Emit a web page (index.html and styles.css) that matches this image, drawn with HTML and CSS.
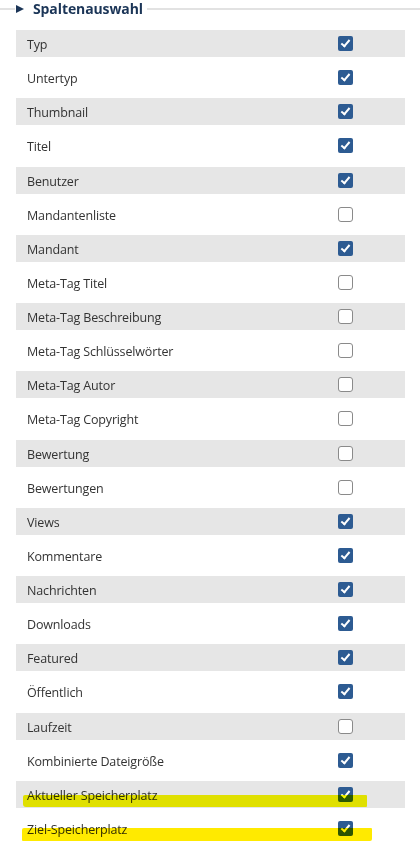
FILE: index.html
```html
<!DOCTYPE html>
<html lang="de">
<head>
<meta charset="utf-8">
<title>Spaltenauswahl</title>
<link rel="stylesheet" href="styles.css">
</head>
<body>
<section class="panel">
  <header class="legend">
    <span class="rule rule-left"></span>
    <span class="tri"></span>
    <span class="legend-text">Spaltenauswahl</span>
    <span class="rule rule-right"></span>
  </header>
  <div class="rows">
    <div class="row shade"><span class="label">Typ</span><span class="cb on"></span></div>
    <div class="row"><span class="label">Untertyp</span><span class="cb on"></span></div>
    <div class="row shade"><span class="label">Thumbnail</span><span class="cb on"></span></div>
    <div class="row"><span class="label">Titel</span><span class="cb on"></span></div>
    <div class="row shade"><span class="label">Benutzer</span><span class="cb on"></span></div>
    <div class="row"><span class="label">Mandantenliste</span><span class="cb"></span></div>
    <div class="row shade"><span class="label">Mandant</span><span class="cb on"></span></div>
    <div class="row"><span class="label">Meta-Tag Titel</span><span class="cb"></span></div>
    <div class="row shade"><span class="label">Meta-Tag Beschreibung</span><span class="cb"></span></div>
    <div class="row"><span class="label">Meta-Tag Schlüsselwörter</span><span class="cb"></span></div>
    <div class="row shade"><span class="label">Meta-Tag Autor</span><span class="cb"></span></div>
    <div class="row"><span class="label">Meta-Tag Copyright</span><span class="cb"></span></div>
    <div class="row shade"><span class="label">Bewertung</span><span class="cb"></span></div>
    <div class="row"><span class="label">Bewertungen</span><span class="cb"></span></div>
    <div class="row shade"><span class="label">Views</span><span class="cb on"></span></div>
    <div class="row"><span class="label">Kommentare</span><span class="cb on"></span></div>
    <div class="row shade"><span class="label">Nachrichten</span><span class="cb on"></span></div>
    <div class="row"><span class="label">Downloads</span><span class="cb on"></span></div>
    <div class="row shade"><span class="label">Featured</span><span class="cb on"></span></div>
    <div class="row"><span class="label">Öffentlich</span><span class="cb on"></span></div>
    <div class="row shade"><span class="label">Laufzeit</span><span class="cb"></span></div>
    <div class="row"><span class="label">Kombinierte Dateigröße</span><span class="cb on"></span></div>
    <div class="row shade"><span class="label">Aktueller Speicherplatz</span><span class="cb on"></span><span class="mark mark-a"></span></div>
    <div class="row"><span class="label">Ziel-Speicherplatz</span><span class="cb on"></span><span class="mark mark-b"></span></div>
  </div>
</section>
</body>
</html>
```
FILE: styles.css
```css
html, body {
  margin: 0;
  padding: 0;
  background: #ffffff;
}
body {
  width: 420px;
  height: 848px;
  overflow: hidden;
  font-family: "Open Sans", "Noto Sans", sans-serif;
}
.panel {
  display: flex;
  flex-direction: column;
}
.legend {
  display: flex;
  align-items: center;
  height: 18px;
}
.rule {
  height: 2px;
  background: #e2e2e2;
  margin-top: -1px;
}
.rule-left {
  width: 15px;
  flex: none;
}
.rule-right {
  flex: 1;
  margin-left: 4px;
}
.tri {
  flex: none;
  width: 0;
  height: 0;
  margin-left: 1px;
  margin-right: 9px;
  border-top: 4.5px solid transparent;
  border-bottom: 4.5px solid transparent;
  border-left: 8px solid #1b3557;
}
.legend-text {
  font-family: "Open Sans", "Noto Sans", sans-serif;
  font-weight: 700;
  font-size: 14px;
  line-height: 18px;
  color: #1b3557;
  letter-spacing: -0.1px;
}
.rows {
  display: flex;
  flex-direction: column;
  gap: 7.14px;
  margin: 12px 15px 0 16px;
}
.row {
  position: relative;
  height: 27px;
  display: flex;
  align-items: center;
  justify-content: space-between;
  padding: 0 52px 0 11px;
}
.row.shade {
  background: #e6e6e6;
}
.label {
  font-size: 12.5px;
  color: #333333;
  letter-spacing: -0.15px;
  position: relative;
  top: 1px;
}
.cb {
  width: 13px;
  height: 13px;
  border: 1px solid #8a8a8a;
  border-radius: 3px;
  background: #ffffff;
  position: relative;
}
.cb.on {
  width: 15px;
  height: 15px;
  border: 0;
  border-radius: 2px;
  background: #2d5b92;
}
.cb.on::after {
  content: "";
  position: absolute;
  left: 5px;
  top: 2px;
  width: 3px;
  height: 7px;
  border-right: 2.5px solid #ffffff;
  border-bottom: 2.5px solid #ffffff;
  transform: rotate(40deg);
}
.mark {
  position: absolute;
  mix-blend-mode: multiply;
}
.mark-a {
  background: #f9f900;
  left: 7px;
  top: 14px;
  width: 344px;
  height: 12px;
  border-radius: 2px 1px 1px 3px;
}
.mark-b {
  background: #ffea00;
  left: 6px;
  top: 13px;
  width: 350px;
  height: 13px;
  border-radius: 2px 1px 2px 1px;
}
```
